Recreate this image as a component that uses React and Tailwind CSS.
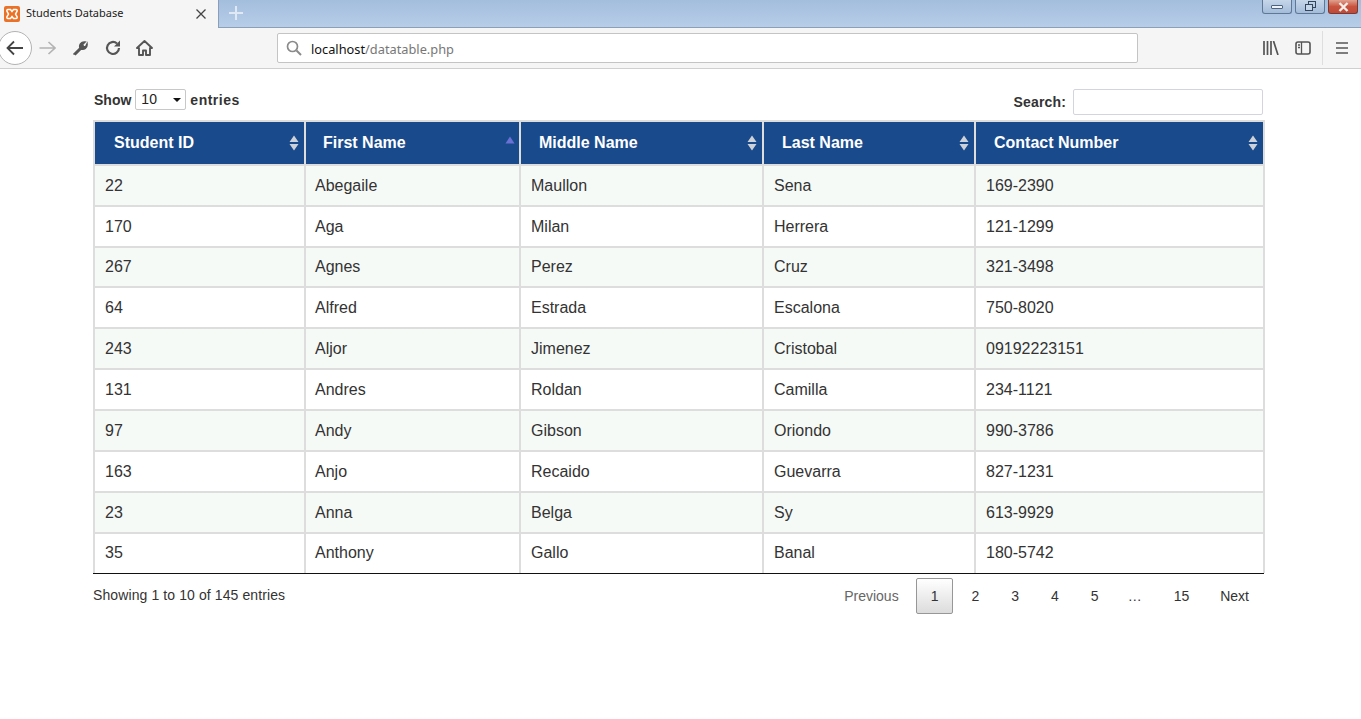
import React from "react";

const rows = [
  { h: "h-[41px]", cells: ["22", "Abegaile", "Maullon", "Sena", "169-2390"] },
  { h: "h-[41px]", cells: ["170", "Aga", "Milan", "Herrera", "121-1299"] },
  { h: "h-[40px]", cells: ["267", "Agnes", "Perez", "Cruz", "321-3498"] },
  { h: "h-[41px]", cells: ["64", "Alfred", "Estrada", "Escalona", "750-8020"] },
  { h: "h-[41px]", cells: ["243", "Aljor", "Jimenez", "Cristobal", "09192223151"] },
  { h: "h-[41px]", cells: ["131", "Andres", "Roldan", "Camilla", "234-1121"] },
  { h: "h-[41px]", cells: ["97", "Andy", "Gibson", "Oriondo", "990-3786"] },
  { h: "h-[41px]", cells: ["163", "Anjo", "Recaido", "Guevarra", "827-1231"] },
  { h: "h-[41px]", cells: ["23", "Anna", "Belga", "Sy", "613-9929"] },
  { h: "h-[40px]", cells: ["35", "Anthony", "Gallo", "Banal", "180-5742"] },
];

const cols = [
  { name: "Student ID", w: "w-[211px]", th: "pl-[19px] pr-[5px]", td: "pl-[10px]" },
  { name: "First Name", w: "w-[215px]", th: "pl-[17px] pr-[4px]", td: "pl-[9px]", active: true },
  { name: "Middle Name", w: "w-[243px]", th: "pl-[18px] pr-[5px]", td: "pl-[10px]" },
  { name: "Last Name", w: "w-[212px]", th: "pl-[18px] pr-[5px]", td: "pl-[10px]" },
  { name: "Contact Number", w: "w-[289px]", th: "pl-[18px] pr-[5px]", td: "pl-[10px]" },
];

function Sort({ active }) {
  if (active) {
    return (
      <svg width="10" height="8" viewBox="0 0 10 8" className="mb-[6px] shrink-0">
        <path d="M5 0.500 L9.500 7.500 L0.500 7.500 Z" fill="#6a70d4" />
      </svg>
    );
  }
  return (
    <svg width="10" height="16" viewBox="0 0 10 16" className="shrink-0">
      <path d="M5 0.500 L9.500 7 L0.500 7 Z M0.500 9 L9.500 9 L5 15.500 Z" fill="#cdd1d9" />
    </svg>
  );
}

function WinBtn({ children, red }) {
  return (
    <div
      className={
        "w-[30px] h-[14px] rounded-b-[3px] border border-t-0 flex items-center justify-center " +
        (red
          ? "border-[#7a3a33] bg-gradient-to-b from-[#e0a090] via-[#c8543f] to-[#c04a3a]"
          : "border-[#5f7896] bg-gradient-to-b from-[#c6d6ea] to-[#a4bcd9]")
      }
    >
      {children}
    </div>
  );
}

function PageBtn({ children, current, color = "text-[#333]", pad = "px-[14px]" }) {
  return (
    <div
      className={
        "h-[36px] pt-[1px] border rounded-[2px] flex items-center justify-center " +
        pad + " " + color + " " +
        (current
          ? "border-[#979797] bg-gradient-to-b from-white to-[#dcdcdc]"
          : "border-transparent")
      }
    >
      {children}
    </div>
  );
}

export default function App() {
  return (
    <div className="min-h-[719px] bg-white font-['Liberation_Sans',Arial,sans-serif] text-[#333]">
      {/* tab strip */}
      <div className="h-[28px] flex bg-gradient-to-b from-[#a3bedd] to-[#b7cde8] border-b border-[#8ba0b8]">
        <div className="w-[219px] h-[28px] bg-[#f5f5f5] flex items-center pl-[4px] border-r border-[#8ba0b8] shrink-0">
          <svg width="16" height="16" viewBox="0 0 16 16" className="shrink-0">
            <rect width="16" height="16" rx="2" fill="#ea7125" />
            <path d="M4 3.500h2.500l1.500 2 1.500-2H12c1 0 1.500 1 1 2L11.500 8l1.500 2.500c.5 1 0 2-1 2H9.500L8 10.500l-1.500 2H4c-1 0-1.500-1-1-2L4.500 8 3 5.500c-.5-1 0-2 1-2z" fill="none" stroke="#fff" strokeWidth="1.500" />
          </svg>
          <span className="ml-[6px] pb-[1px] text-[11px] text-[#222] font-['Noto_Sans',sans-serif] whitespace-nowrap">Students Database</span>
          <svg width="12" height="12" viewBox="0 0 12 12" className="ml-auto mr-[11px]">
            <path d="M1.500 1.500 L10.500 10.500 M10.500 1.500 L1.500 10.500" stroke="#444" strokeWidth="1.300" />
          </svg>
        </div>
        <svg width="14" height="14" viewBox="0 0 14 14" className="ml-[10px] mt-[6px]">
          <path d="M7 0 V14 M0 7 H14" stroke="#dfe8f3" strokeWidth="2" />
        </svg>
        <div className="ml-auto mr-[3px] flex gap-[3px] items-start">
          <WinBtn><div className="w-[12px] h-[4px] bg-[#eef3f9] border border-[#4d6480] rounded-[1px]" /></WinBtn>
          <WinBtn>
            <svg width="13" height="11" viewBox="0 0 13 11">
              <rect x="4.500" y="0.500" width="7" height="6" fill="none" stroke="#33465c" />
              <rect x="1.500" y="3.500" width="7" height="6" fill="#c6d6ea" stroke="#33465c" />
            </svg>
          </WinBtn>
          <WinBtn red>
            <svg width="13" height="10" viewBox="0 0 13 10">
              <path d="M2.500 1 L10.500 9 M10.500 1 L2.500 9" stroke="#f4efe9" strokeWidth="2.400" />
            </svg>
          </WinBtn>
        </div>
      </div>

      {/* toolbar */}
      <div className="h-[41px] bg-[#f5f5f5] border-b border-[#cfcfcf] flex items-center">
        <div className="w-[34px] h-[34px] -ml-[2px] rounded-full border border-[#b3b3b3] bg-white flex items-center justify-center shrink-0">
          <svg width="18" height="16" viewBox="0 0 18 16">
            <path d="M8 1.500 L1.500 8 L8 14.500 M1.500 8 H17" fill="none" stroke="#444" strokeWidth="1.800" />
          </svg>
        </div>
        <svg width="17" height="14" viewBox="0 0 17 14" className="ml-[7px] shrink-0">
          <path d="M9.500 1 L16 7 L9.500 13 M16 7 H0.500" fill="none" stroke="#b3b3b3" strokeWidth="1.700" />
        </svg>
        <svg width="16" height="16" viewBox="0 0 16 16" className="ml-[16px] shrink-0">
          <path d="M1.500 14.500 L8 8 M8 8 C7 5 9 1.500 13 2 L10.500 4.500 L11.500 6.500 L13.500 7 L15 4 C15.500 8 12 10 9 9 L3 15" fill="#555" stroke="#555" strokeWidth="1.600" />
        </svg>
        <svg width="16" height="16" viewBox="0 0 16 16" className="ml-[17px] shrink-0">
          <path d="M14 8 A6 6 0 1 1 12 3.500" fill="none" stroke="#555" strokeWidth="2.200" />
          <path d="M15 0.500 V6.500 H9 Z" fill="#555" />
        </svg>
        <svg width="17" height="16" viewBox="0 0 17 16" className="ml-[15px] shrink-0">
          <path d="M8.500 1 L1 8 H3 V15 H7 V10.500 H10 V15 H14 V8 H16 Z" fill="none" stroke="#555" strokeWidth="1.900" strokeLinejoin="round" />
        </svg>
        <div className="ml-[124px] w-[861px] h-[30px] bg-white border border-[#c4c4c4] rounded-[2px] flex items-center pl-[8px] shrink-0">
          <svg width="16" height="16" viewBox="0 0 16 16">
            <circle cx="6.500" cy="6.500" r="5" fill="none" stroke="#8a8a8a" strokeWidth="1.700" />
            <path d="M10.500 10.500 L15 15" stroke="#8a8a8a" strokeWidth="2" />
          </svg>
          <span className="ml-[9px] pt-[4px] text-[12.800px] font-['Noto_Sans',sans-serif] text-[#111] whitespace-nowrap">
            localhost<span className="text-[#777]">/datatable.php</span>
          </span>
        </div>
        <svg width="16" height="14" viewBox="0 0 16 14" className="ml-[125px] shrink-0">
          <path d="M1 0 V14 M4.500 0 V14 M8 0 V14 M10.500 0 L15 14" stroke="#555" strokeWidth="1.700" fill="none" />
        </svg>
        <svg width="16" height="14" viewBox="0 0 16 14" className="ml-[16px] shrink-0">
          <rect x="1" y="1" width="14" height="12" rx="2" fill="none" stroke="#555" strokeWidth="1.600" />
          <path d="M6.500 1 V13 M3 4 H5 M3 6.500 H5" stroke="#555" strokeWidth="1.300" />
        </svg>
        <div className="ml-[11px] w-px h-[34px] bg-[#dedede] shrink-0" />
        <svg width="14" height="12" viewBox="0 0 14 12" className="ml-[12px] shrink-0">
          <path d="M1 1 H13 M1 6 H13 M1 11 H13" stroke="#555" strokeWidth="1.700" />
        </svg>
      </div>

      {/* page */}
      <div className="pl-[93px] w-[1265px]">
        <div className="flex justify-between h-[51px] pl-px pr-[2px]">
          <label className="flex items-start pt-[20px] text-[14px] font-bold">
            <span className="leading-[21px] pt-[1px]">Show</span>
            <div className="ml-[4px] w-[51px] h-[21px] border border-[#c8c8c8] rounded-[2px] bg-white flex items-center justify-between pl-[5px] pr-[4px] font-normal">
              <span className="text-[14px] text-[#222]">10</span>
              <svg width="8" height="4" viewBox="0 0 8 4"><path d="M0 0 H8 L4 4 Z" fill="#111" /></svg>
            </div>
            <span className="ml-[4px] leading-[21px] pt-[1px] tracking-[0.5px]">entries</span>
          </label>
          <label className="flex items-start pt-[20px] text-[14px] font-bold">
            <span className="leading-[26px] tracking-[0.15px]">Search:</span>
            <div className="ml-[7px] w-[190px] h-[26px] border border-[#d4d4dc] rounded-[2px] bg-white" />
          </label>
        </div>

        <table className="w-[1171px] table-fixed border-collapse text-[16px] leading-[22px]">
          <colgroup>
            {cols.map((c) => <col key={c.name} className={c.w} />)}
          </colgroup>
          <thead>
            <tr className="bg-[#194a8c] text-white">
              {cols.map((c) => (
                <th key={c.name} className="border-2 border-[#dddddd] border-b-[#111] border-b-[1px] p-0 font-bold text-left h-[44px]">
                  <div className={"flex items-center justify-between " + c.th}>
                    <span>{c.name}</span>
                    <Sort active={c.active} />
                  </div>
                </th>
              ))}
            </tr>
          </thead>
          <tbody>
            {rows.map((r, i) => (
              <tr key={r.cells[0]} className={(i % 2 === 0 ? "bg-[#f6faf7] " : "bg-white ") + r.h}>
                {r.cells.map((v, j) => (
                  <td key={j} className={"border-2 border-[#dddddd] p-0 pr-[10px] align-middle " + cols[j].td + (i === rows.length - 1 ? " border-b-0 pb-[2px]" : "")}>
                    {v}
                  </td>
                ))}
              </tr>
            ))}
          </tbody>
        </table>
        <div className="h-px w-[1171px] bg-[#111]" />

        <div className="flex justify-between items-start pt-[4px] text-[14px]">
          <div className="pt-[7px] leading-[20px] tracking-[0.1px]">Showing 1 to 10 of 145 entries</div>
          <div className="flex gap-[2px]">
            <PageBtn color="text-[#666]">Previous</PageBtn>
            <PageBtn current>1</PageBtn>
            <PageBtn pad="pl-[15px] pr-[13px]">2</PageBtn>
            <PageBtn pad="pl-[15px] pr-[13px]">3</PageBtn>
            <PageBtn pad="pl-[15px] pr-[13px]">4</PageBtn>
            <PageBtn pad="pl-[15px] pr-[13px]">5</PageBtn>
            <div className="h-[36px] w-[42px] pr-[2px] flex items-center justify-center">…</div>
            <PageBtn>15</PageBtn>
            <PageBtn pad="pl-[13px] pr-[15px]">Next</PageBtn>
          </div>
        </div>
      </div>
    </div>
  );
}
